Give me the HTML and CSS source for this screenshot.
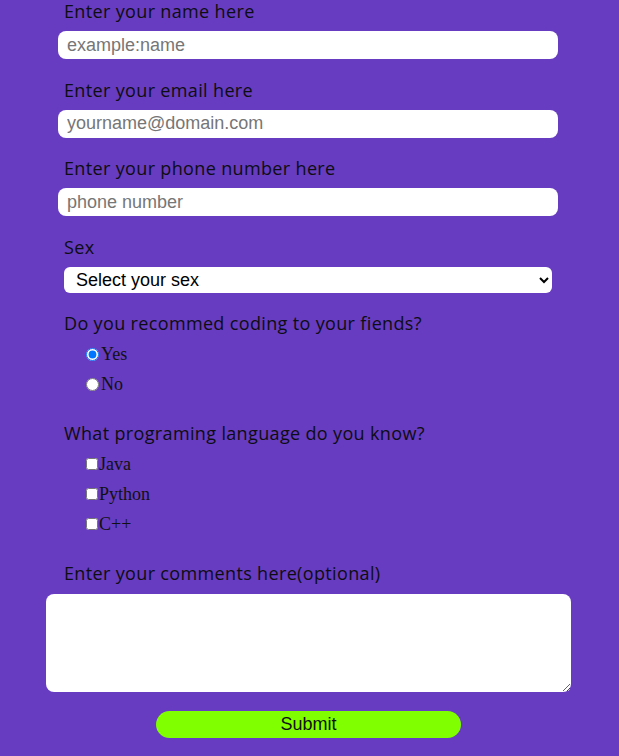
FILE: index.html
```html
<!DOCTYPE html>
<html>
<head>
<meta charset="utf-8">
<link rel="stylesheet" href="styles.css">
</head>
<body>
<form class="survey">
  <label class="q" for="name">Enter your name here</label>
  <input class="field" id="name" type="text" placeholder="example:name">

  <label class="q" for="email">Enter your email here</label>
  <input class="field" id="email" type="email" placeholder="yourname@domain.com">

  <label class="q" for="phone">Enter your phone number here</label>
  <input class="field" id="phone" type="tel" placeholder="phone number">

  <label class="q" for="sex">Sex</label>
  <select class="pick" id="sex">
    <option>Select your sex</option>
    <option>Male</option>
    <option>Female</option>
  </select>

  <p class="q">Do you recommed coding to your fiends?</p>
  <div class="opts">
    <label class="opt"><input class="tick" type="radio" name="rec" checked>Yes</label>
    <label class="opt"><input class="tick" type="radio" name="rec">No</label>
  </div>

  <p class="q">What programing language do you know?</p>
  <div class="opts">
    <label class="opt"><input class="tick box" type="checkbox">Java</label>
    <label class="opt"><input class="tick box" type="checkbox">Python</label>
    <label class="opt"><input class="tick box" type="checkbox">C++</label>
  </div>

  <label class="q" for="comments">Enter your comments here(optional)</label>
  <textarea class="notes" id="comments"></textarea>

  <button class="send" type="submit">Submit</button>
</form>
</body>
</html>
```
FILE: styles.css
```css
html, body {
  margin: 0;
  padding: 0;
  background: #673cc1;
}
body {
  height: 756px;
  overflow: hidden;
}
.survey {
  width: 525px;
  margin-left: 46px;
  display: flex;
  flex-direction: column;
  align-items: flex-start;
}
.q {
  margin: 0;
  padding-left: 18px;
  font-family: "Open Sans", sans-serif;
  font-size: 18px;
  letter-spacing: 0.35px;
  line-height: 22px;
  height: 22px;
  color: #0d0d12;
  display: block;
}
.field {
  box-sizing: border-box;
  width: 500px;
  height: 28px;
  margin: 9px 0 19.5px 12px;
  padding: 0 9px;
  border: none;
  border-radius: 8px;
  background: #fff;
  font-family: "Liberation Sans", Arial, sans-serif;
  font-size: 18px;
  color: #000;
  outline: none;
}
.field::placeholder {
  color: #767676;
}
.pick {
  box-sizing: border-box;
  width: 488px;
  height: 26px;
  margin: 9.5px 0 19px 18px;
  padding: 0 6px 0 8px;
  border: none;
  border-radius: 6px;
  background: #fff;
  font-family: "Liberation Sans", Arial, sans-serif;
  font-size: 18px;
  color: #000;
}
.opts {
  margin: 5px 0 23px 0;
  display: flex;
  flex-direction: column;
}
.opt {
  display: flex;
  align-items: center;
  height: 30px;
  padding-left: 40px;
  font-family: "Liberation Serif", "Times New Roman", serif;
  font-size: 18px;
  color: #111;
}
.tick {
  margin: 0 2px 0 0;
  width: 13px;
  height: 13px;
}
.box {
  width: 12px;
  height: 12px;
  margin: 0 1px 0 0;
}
.notes {
  box-sizing: border-box;
  width: 525px;
  height: 98px;
  margin: 10px 0 19px 0;
  border: none;
  border-radius: 8px;
  background: #fff;
  resize: both;
  outline: none;
}
.send {
  align-self: flex-start;
  margin-left: 110px;
  width: 305px;
  height: 27px;
  border: none;
  border-radius: 14px;
  background: #7fff00;
  font-family: "Liberation Sans", Arial, sans-serif;
  font-size: 18px;
  color: #111;
  padding: 0;
}
```
